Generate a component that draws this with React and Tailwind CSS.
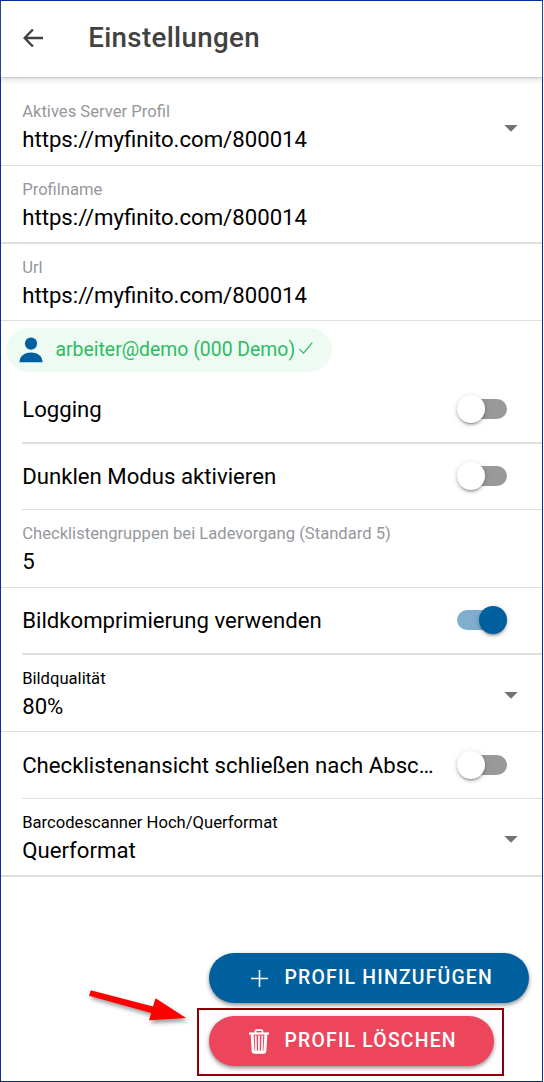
import { useState } from 'react'
import clsx from 'clsx'

const SERVER_URL = 'https://myfinito.com/800014'

function Caret() {
  return (
    <svg width="14" height="7" viewBox="0 0 14 7" className="mr-[24px] mt-1 shrink-0">
      <path d="M0.3 0h13.4L7 6.8z" fill="#737373" />
    </svg>
  )
}

function Field({ label, value, dark, select, className }) {
  return (
    <div className={clsx('flex items-center border-[#dfdfdf] pl-[21.2px]', className)}>
      <div className="min-w-0 flex-1 pt-[2px]">
        <p className={clsx('text-[16.63px] leading-[22px]', dark ? 'text-black' : 'text-[#96979d]')}>{label}</p>
        <p className="pt-px text-[22.18px] leading-[30px] text-black">{value}</p>
      </div>
      {select && <Caret />}
    </div>
  )
}

function Toggle({ on, onChange }) {
  return (
    <button
      role="switch"
      aria-checked={on}
      onClick={() => onChange(!on)}
      className="mr-[35px] flex h-7 w-[50px] shrink-0 items-center"
    >
      <span className={clsx('flex h-5 w-full items-center rounded-full', on ? 'justify-end bg-[#80aecf]' : 'bg-[#999999]')}>
        <span
          className={clsx(
            'h-7 w-7 rounded-full shadow-[0_3px_2px_-2px_rgba(0,0,0,0.25),0_2px_3px_rgba(0,0,0,0.18),0_1px_6px_rgba(0,0,0,0.14)]',
            on ? 'bg-[#00609e]' : 'bg-white',
          )}
        />
      </span>
    </button>
  )
}

function ToggleRow({ label, on, onChange, className }) {
  return (
    <div className="pl-[21px]">
      <div className={clsx('flex items-center justify-between border-[#dfdfdf] pl-[0.2px]', className)}>
        <span className="whitespace-nowrap text-[22.18px] leading-[30px] text-black">{label}</span>
        <Toggle on={on} onChange={onChange} />
      </div>
    </div>
  )
}

export default function App() {
  const [logging, setLogging] = useState(false)
  const [darkMode, setDarkMode] = useState(false)
  const [compress, setCompress] = useState(true)
  const [closeView, setCloseView] = useState(false)

  return (
    <div className="h-[1082px] w-[544px] overflow-hidden bg-white font-['Roboto','Liberation_Sans',sans-serif]">
      <div className="relative flex h-full w-[543px] flex-col border border-[#00309a]">
        <header className="flex h-[76px] shrink-0 items-center pb-[2px] pl-[22px] shadow-[0_1px_1px_#cfcfcf,0_3px_5px_rgba(0,0,0,0.14)]">
          <svg width="21" height="20" viewBox="0 0 21 20" fill="none" stroke="#424242" strokeWidth="2.4">
            <path d="M9.9 1.5L1.7 10l8.2 8.500M2 10h18" />
          </svg>
          <h1 className="pl-[44.2px] text-[27.7px] font-medium leading-9 tracking-[0.35px] text-[#424242]">Einstellungen</h1>
        </header>

        <main className="flex flex-col pt-[10px]">
          <Field label="Aktives Server Profil" value={SERVER_URL} select className="h-[79px] border-b" />
          <Field label="Profilname" value={SERVER_URL} className="h-[78px] border-b-2" />
          <Field label="Url" value={SERVER_URL} className="h-[77px] border-b" />

          <div className="flex h-[55px] items-center pl-[5px] pt-[2px]">
            <div className="flex h-11 w-[325.5px] items-center rounded-full bg-[#eefbf3] pl-[12.5px] text-[#2dbb64]">
              <svg width="24" height="26" viewBox="0 0 24 26" fill="#00609e">
                <circle cx="12" cy="6.6" r="6.1" />
                <path d="M0.5 25.3c0-6 4.5-9.8 11.5-9.8s11.5 3.8 11.5 9.8z" />
              </svg>
              <span className="pl-[13px] pt-px text-[19.4px] leading-6">arbeiter@demo (000 Demo)</span>
              <svg width="14" height="12" viewBox="0 0 14 12" fill="none" stroke="currentColor" strokeWidth="1.2" className="mb-1 ml-[3.5px]">
                <path d="M0.5 7.2l4 4L13.3 0.7" />
              </svg>
            </div>
          </div>

          <ToggleRow label="Logging" on={logging} onChange={setLogging} className="h-[68px] border-b-2" />
          <ToggleRow label="Dunklen Modus aktivieren" on={darkMode} onChange={setDarkMode} className="h-[66px] border-b pb-px" />
          <Field label="Checklistengruppen bei Ladevorgang (Standard 5)" value="5" className="h-[78px] border-b" />
          <ToggleRow label="Bildkomprimierung verwenden" on={compress} onChange={setCompress} className="h-[67px] border-b-2 pb-px" />
          <Field dark select label="Bildqualität" value="80%" className="h-[77px] border-b" />
          <ToggleRow
            label="Checklistenansicht schließen nach Absc…"
            on={closeView}
            onChange={setCloseView}
            className="h-[67px] border-b"
          />
          <Field dark select label="Barcodescanner Hoch/Querformat" value="Querformat" className="h-[78px] border-b-2" />
        </main>

        <div className="mt-[76px] flex flex-col items-end text-[19.4px] font-medium tracking-[1.2px] text-white">
          <button className="mr-[13px] flex h-[50px] w-[320px] items-center rounded-full bg-[#00609e] pl-[42px] shadow-[0_2px_4px_rgba(0,0,0,0.45)]">
            <svg width="17" height="17" viewBox="0 0 17 17" stroke="white" strokeWidth="1.6">
              <path d="M8.5 0v17M0 8.5h17" />
            </svg>
            <span className="pl-[16.5px]">PROFIL HINZUFÜGEN</span>
          </button>
          <div className="mr-[38px] mt-[5px] flex h-[68px] w-[307px] items-center border-2 border-[#8f0005] pb-[2px] pl-[10px]">
            <button className="flex h-[50px] w-[285px] items-center rounded-full bg-[#ed455c] pl-[40px] shadow-[0_2px_4px_rgba(0,0,0,0.45)]">
              <svg width="20" height="25" viewBox="0 0 20 25" fill="none" stroke="white">
                <path d="M0 4.5h20" strokeWidth="2.2" />
                <path d="M6.5 4V2.2q0-1 1-1h5q1 0 1 1V4" strokeWidth="1.8" />
                <path d="M3.1 5l1 17q.1 1.3 1.3 1.3h9.2q1.2 0 1.3-1.3L16.9 5" strokeWidth="2.9" />
                <path d="M6.7 6.5l.4 15.5M10 6.5V22M13.3 6.5L12.9 22" strokeWidth="1.7" />
              </svg>
              <span className="pl-[15.5px]">PROFIL LÖSCHEN</span>
            </button>
          </div>
        </div>

        {/* pointer arrow over the page */}
        <svg className="absolute left-[84px] top-[982px] overflow-visible" width="106" height="44" viewBox="0 0 106 44">
          <path
            d="M5.7 7.2L68 23.4 70.5 15.3 101 35 64 37.3 66.3 30 4 12.8z"
            fill="#ff0000"
            className="drop-shadow-[2px_3px_2px_rgba(0,0,0,0.4)]"
          />
        </svg>
      </div>
    </div>
  )
}
